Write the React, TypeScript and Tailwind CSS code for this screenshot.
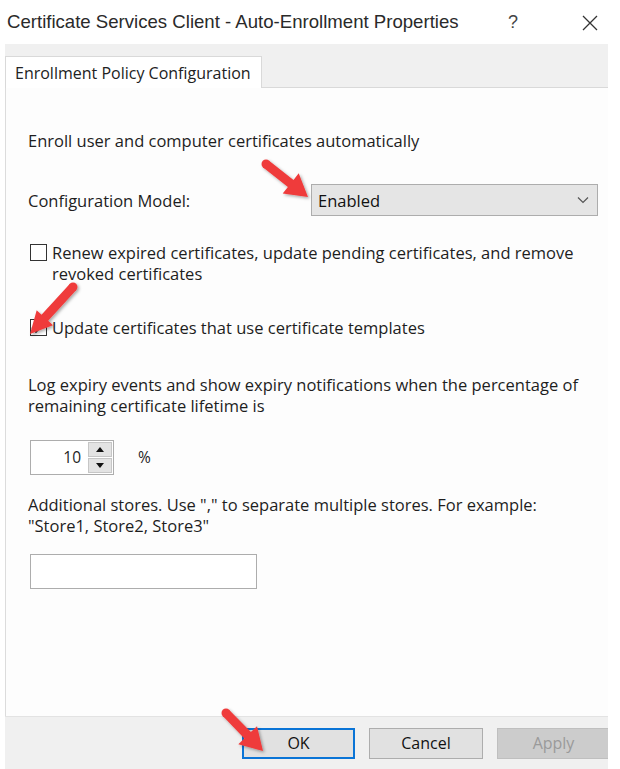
import React from "react";

type Pt = [number, number];

function arrowPoints(tail: Pt, tip: Pt, w = 9, h = 22, hw = 26): string {
  const dx = tip[0] - tail[0];
  const dy = tip[1] - tail[1];
  const len = Math.hypot(dx, dy);
  const ux = dx / len;
  const uy = dy / len;
  const nx = -uy;
  const ny = ux;
  const bx = tip[0] - ux * h;
  const by = tip[1] - uy * h;
  const pts: Pt[] = [
    [tail[0] + (nx * w) / 2, tail[1] + (ny * w) / 2],
    [bx + (nx * w) / 2, by + (ny * w) / 2],
    [bx + (nx * hw) / 2, by + (ny * hw) / 2],
    tip,
    [bx - (nx * hw) / 2, by - (ny * hw) / 2],
    [bx - (nx * w) / 2, by - (ny * w) / 2],
    [tail[0] - (nx * w) / 2, tail[1] - (ny * w) / 2],
  ];
  return pts.map((p) => `${p[0].toFixed(1)},${p[1].toFixed(1)}`).join(" ");
}

function Arrow({ tail, tip, hw = 26 }: { tail: Pt; tip: Pt; hw?: number }) {
  return (
    <g filter="url(#shadow)">
      <circle cx={tail[0]} cy={tail[1]} r={4.5} fill="#ef3b3b" />
      <polygon points={arrowPoints(tail, tip, 9, 22, hw)} fill="#ef3b3b" />
    </g>
  );
}

export default function App() {
  return (
    <div className="w-[620px] h-[769px] bg-white relative overflow-hidden font-['Open_Sans','Noto_Sans',sans-serif] text-[#1e1e1e]">
      {/* Title bar */}
      <div className="h-[44px] flex items-center pl-[7px] pr-[22px]">
        <span className="text-[18.6px] text-[#2a2a2a] font-['Liberation_Sans',Arial,sans-serif]">
          Certificate Services Client - Auto-Enrollment Properties
        </span>
        <span className="ml-auto text-[18px] text-[#444] font-['Liberation_Sans',Arial,sans-serif] mr-[64px]">?</span>
        <svg width="16" height="16" viewBox="0 0 16 16" className="mt-[1px]">
          <path d="M1 1 L15 15 M15 1 L1 15" stroke="#333" strokeWidth="1.3" fill="none" />
        </svg>
      </div>

      {/* Window body */}
      <div className="ml-[5px] w-[603px] h-[725px] flex flex-col">
        {/* Tab strip */}
        <div className="h-[44px] bg-[#f0f0f0] flex items-end shrink-0">
          <div className="h-[32px] w-[257px] bg-white border-t border-r border-l border-[#d9d9d9] flex items-center pl-[9px] text-[16px] text-[#222]">
            Enrollment Policy Configuration
          </div>
          <div className="flex-1 h-full border-b border-[#d9d9d9]" />
        </div>

        {/* Content */}
        <div className="flex-1 bg-[#fdfdfd] border-l border-[#dcdcdc] pl-[22px] pr-[6px] pt-[42px] flex flex-col text-[16.5px] leading-[21px]">
          <div>Enroll user and computer certificates automatically</div>

          <div className="flex items-center mt-[33px]">
            <div className="w-[283px]">Configuration Model:</div>
            <div className="w-[287px] h-[32px] bg-[#e5e5e5] border border-[#adadad] flex items-center pl-[6px] pr-[8px] text-[16.5px] text-[#111]">
              <span>Enabled</span>
              <svg width="12" height="8" viewBox="0 0 12 8" className="ml-auto">
                <path d="M1 1.5 L6 6.5 L11 1.5" stroke="#555" strokeWidth="1.2" fill="none" />
              </svg>
            </div>
          </div>

          <div className="flex items-start mt-[26px]">
            <div className="w-[17px] h-[17px] border border-[#333] bg-white mt-[2px] ml-[2px] shrink-0" />
            <div className="ml-[5px]">
              Renew expired certificates, update pending certificates, and remove
              <br />
              revoked certificates
            </div>
          </div>

          <div className="flex items-start mt-[33px]">
            <div className="w-[17px] h-[17px] border border-[#333] bg-white mt-[2px] ml-[2px] shrink-0 flex items-center justify-center">
              <svg width="15" height="13" viewBox="0 0 15 13">
                <path d="M1 6.5 L5 11 L14 1" stroke="#2a2a2a" strokeWidth="1.7" fill="none" />
              </svg>
            </div>
            <div className="ml-[5px]">Update certificates that use certificate templates</div>
          </div>

          <div className="mt-[36px]">
            Log expiry events and show expiry notifications when the percentage of
            <br />
            remaining certificate lifetime is
          </div>

          <div className="flex items-center mt-[24px]">
            <div className="ml-[2px] w-[84px] h-[35px] border border-[#adadad] bg-white flex">
              <div className="flex-1 flex items-center justify-end pr-[7px] text-[15.5px]">10</div>
              <div className="w-[25px] flex flex-col gap-[1px] py-[1px] pr-[1px]">
                <div className="flex-1 bg-[#e3e3e3] border border-[#c6c6c6] flex items-center justify-center">
                  <svg width="8" height="5" viewBox="0 0 8 5">
                    <path d="M0 5 L4 0 L8 5 Z" fill="#111" />
                  </svg>
                </div>
                <div className="flex-1 bg-[#e3e3e3] border border-[#c6c6c6] flex items-center justify-center">
                  <svg width="8" height="5" viewBox="0 0 8 5">
                    <path d="M0 0 L4 5 L8 0 Z" fill="#111" />
                  </svg>
                </div>
              </div>
            </div>
            <div className="ml-[24px] text-[15.5px]">%</div>
          </div>

          <div className="mt-[19px]">
            Additional stores. Use &quot;,&quot; to separate multiple stores. For example:
            <br />
            &quot;Store1, Store2, Store3&quot;
          </div>

          <div className="ml-[2px] mt-[18px] w-[227px] h-[35px] border border-[#adadad] bg-white" />
        </div>

        {/* Footer */}
        <div className="h-[53px] bg-[#f0f0f0] border-t border-[#e3e3e3] flex items-center pl-[237px] gap-[14px] shrink-0 overflow-hidden">
          <div className="w-[113px] h-[31px] shrink-0 bg-[#e1e1e1] border-2 border-[#0a74d6] flex items-center justify-center text-[16px] text-[#111]">
            OK
          </div>
          <div className="w-[114px] h-[31px] shrink-0 bg-[#e1e1e1] border border-[#adadad] flex items-center justify-center text-[16px] text-[#111]">
            Cancel
          </div>
          <div className="w-[113px] h-[31px] shrink-0 bg-[#cccccc] border border-[#bfbfbf] flex items-center justify-center text-[16px] text-[#9a9a9a]">
            Apply
          </div>
        </div>
      </div>

      {/* Annotation arrows */}
      <svg
        width="620"
        height="769"
        viewBox="0 0 620 769"
        className="absolute top-0 left-0 pointer-events-none"
      >
        <defs>
          <filter id="shadow" x="-20%" y="-20%" width="140%" height="140%">
            <feDropShadow dx="1.5" dy="1.5" stdDeviation="1.5" floodColor="#000" floodOpacity="0.35" />
          </filter>
        </defs>
        <Arrow tail={[266, 164]} tip={[308, 197]} />
        <Arrow tail={[73, 287]} tip={[30, 334]} hw={22} />
        <Arrow tail={[226, 713]} tip={[263, 751]} />
      </svg>
    </div>
  );
}
